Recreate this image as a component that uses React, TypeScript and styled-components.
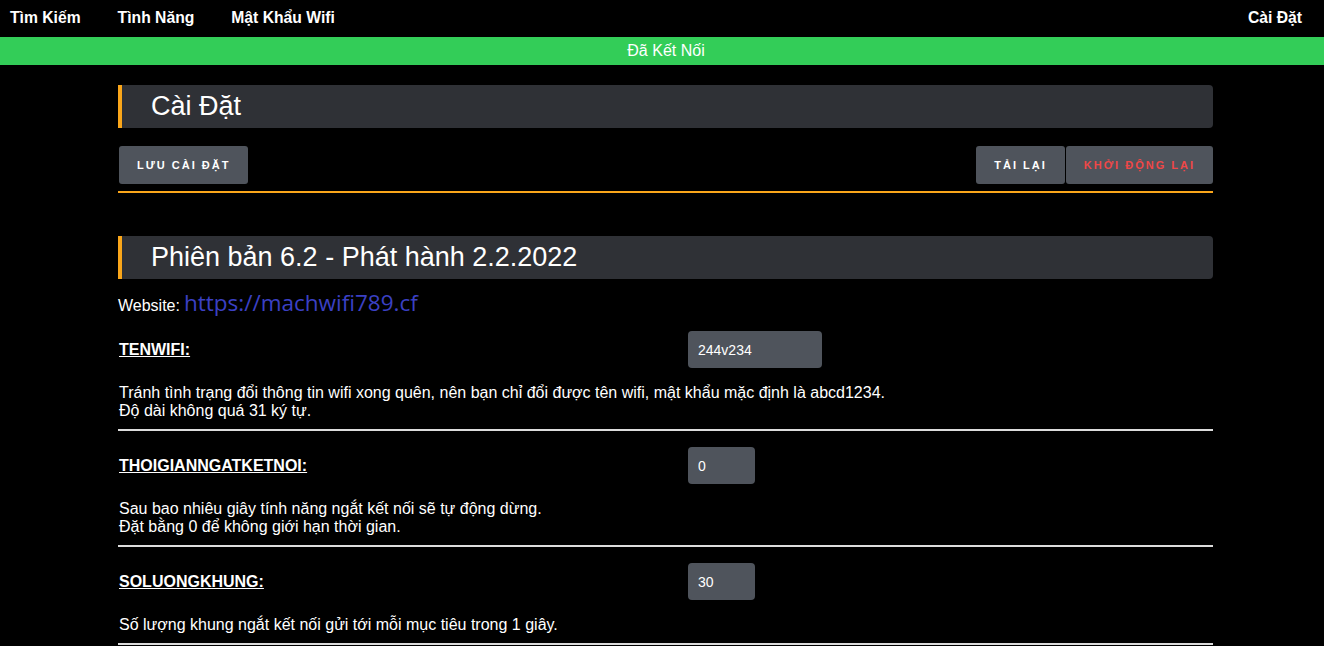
import React from "react";
import styled, { createGlobalStyle } from "styled-components";

const Global = createGlobalStyle`
  html, body { margin: 0; padding: 0; background: #000; }
  body { font-family: "Liberation Sans", Arial, sans-serif; color: #fff; }
  * { box-sizing: border-box; }
`;

const Nav = styled.nav`
  height: 37px;
  display: flex;
  align-items: center;
  padding: 0 22px 1px 10px;
  gap: 37px;
  background: #000;
`;

const NavLink = styled.a<{ $right?: boolean }>`
  color: #fff;
  font-weight: bold;
  font-size: 15.7px;
  text-decoration: none;
  margin-left: ${(p) => (p.$right ? "auto" : "0")};
`;

const Status = styled.div`
  height: 28px;
  background: #33cd58;
  color: #fff;
  font-size: 16px;
  display: flex;
  align-items: center;
  justify-content: center;
  padding-left: 8px;
`;

const Container = styled.main`
  width: 1095px;
  margin: 20px 0 0 118px;
`;

const Heading = styled.h2`
  margin: 0;
  height: 43px;
  background: #2f3136;
  border-left: 4px solid #faa61a;
  border-radius: 0 4px 4px 0;
  padding-left: 29px;
  display: flex;
  align-items: center;
  font-weight: normal;
  font-size: 27px;
  color: #fff;
`;

const Toolbar = styled.div`
  display: flex;
  align-items: center;
  margin-top: 18px;
  padding-bottom: 7px;
  border-bottom: 2px solid #faa61a;
  margin-bottom: 43px;
`;

const Spacer = styled.div`
  flex: 1;
`;

const Button = styled.button<{ $danger?: boolean }>`
  height: 38px;
  padding: 0 18px;
  background: #4f545c;
  border: none;
  border-radius: 3px;
  color: ${(p) => (p.$danger ? "#f04747" : "#fff")};
  font-family: "Liberation Sans", Arial, sans-serif;
  font-weight: bold;
  font-size: 11px;
  letter-spacing: 2px;
  text-transform: uppercase;
  margin-left: 1px;
`;

const WebsiteLine = styled.div`
  margin-top: 8px;
  font-size: 16px;
  display: flex;
  align-items: baseline;
  gap: 4px;
`;

const Link = styled.a`
  font-family: "Open Sans", "Noto Sans", sans-serif;
  font-size: 22.5px;
  color: #3b40c4;
  text-decoration: none;
`;

const Setting = styled.section`
  padding-top: 16px;
  border-bottom: 2px solid #dcdcdc;
  padding-bottom: 9px;
`;

const FirstSetting = styled(Setting)`
  padding-top: 13px;
`;

const SettingHead = styled.div`
  display: grid;
  grid-template-columns: 570px auto;
  align-items: center;
`;

const Label = styled.label`
  font-weight: bold;
  font-size: 16px;
  text-decoration: underline;
  padding-left: 1px;
`;

const Input = styled.input<{ $wide?: boolean }>`
  width: ${(p) => (p.$wide ? "134px" : "67px")};
  height: 37px;
  background: #4f545c;
  border: none;
  border-radius: 4px;
  color: #fff;
  font-family: "Liberation Sans", Arial, sans-serif;
  font-size: 14px;
  padding: 0 10px;
  outline: none;
`;

const Desc = styled.p`
  margin: 16px 0 0 1px;
  font-size: 16px;
  line-height: 18px;
`;

const settings = [
  {
    name: "TENWIFI:",
    value: "244v234",
    wide: true,
    desc: [
      "Tránh tình trạng đổi thông tin wifi xong quên, nên bạn chỉ đổi được tên wifi, mật khẩu mặc định là abcd1234.",
      "Độ dài không quá 31 ký tự.",
    ],
  },
  {
    name: "THOIGIANNGATKETNOI:",
    value: "0",
    wide: false,
    desc: [
      "Sau bao nhiêu giây tính năng ngắt kết nối sẽ tự động dừng.",
      "Đặt bằng 0 để không giới hạn thời gian.",
    ],
  },
  {
    name: "SOLUONGKHUNG:",
    value: "30",
    wide: false,
    desc: ["Số lượng khung ngắt kết nối gửi tới mỗi mục tiêu trong 1 giây."],
  },
];

export default function App() {
  return (
    <>
      <Global />
      <Nav>
        <NavLink>Tìm Kiếm</NavLink>
        <NavLink>Tình Năng</NavLink>
        <NavLink>Mật Khẩu Wifi</NavLink>
        <NavLink $right>Cài Đặt</NavLink>
      </Nav>
      <Status>Đã Kết Nối</Status>
      <Container>
        <Heading>Cài Đặt</Heading>
        <Toolbar>
          <Button>Lưu cài đặt</Button>
          <Spacer />
          <Button>Tải lại</Button>
          <Button $danger>Khởi động lại</Button>
        </Toolbar>
        <Heading>Phiên bản 6.2 - Phát hành 2.2.2022</Heading>
        <WebsiteLine>
          Website:<Link>https://machwifi789.cf</Link>
        </WebsiteLine>
        {settings.map((s, i) => {
          const S = i === 0 ? FirstSetting : Setting;
          return (
            <S key={s.name}>
              <SettingHead>
                <Label>{s.name}</Label>
                <Input $wide={s.wide} defaultValue={s.value} />
              </SettingHead>
              <Desc>
                {s.desc.map((d, j) => (
                  <React.Fragment key={j}>
                    {j > 0 && <br />}
                    {d}
                  </React.Fragment>
                ))}
              </Desc>
            </S>
          );
        })}
      </Container>
    </>
  );
}
